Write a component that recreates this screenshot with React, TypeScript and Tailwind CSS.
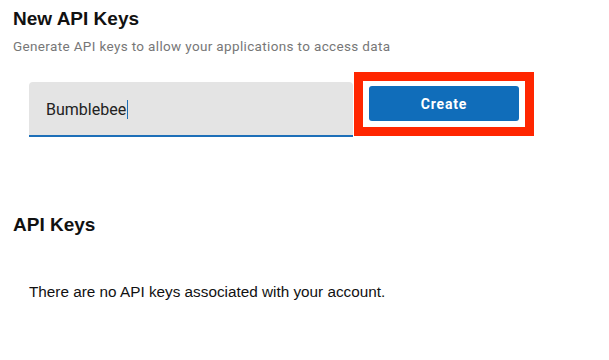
import React from "react";

export default function App() {
  return (
    <div className="min-h-[360px] w-[609px] bg-white pl-[13px] font-['Liberation_Sans',Arial,sans-serif]">
      {/* New keys */}
      <h1 className="pt-[8px] text-[19px] font-bold leading-[22px] text-[#111]">New API Keys</h1>
      <p className="mt-[8px] font-['Roboto',sans-serif] text-[13.5px] leading-[16px] tracking-[0.35px] text-[#777]">
        Generate API keys to allow your applications to access data
      </p>

      <div className="mt-[18px] flex items-start pl-[16px]">
        <div className="mt-[10px] flex h-[55px] w-[324px] items-center rounded-t-[4px] border-b-2 border-[#1d6fb8] bg-[#e4e4e4] px-[17px] pt-[2px]">
          <span className="font-['Roboto',sans-serif] text-[16px] text-[#222]">Bumblebee</span>
          <span className="ml-px h-[19px] w-px bg-[#1d6fb8]" />
        </div>
        <div className="ml-px border-[9.5px] border-[#ff2600] px-[6px] pt-[5px] pb-[6px]">
          <button className="h-[35px] w-[150px] rounded-[3px] bg-[#106dba] pt-[2px] font-['Roboto',sans-serif] text-[14px] font-bold tracking-[0.06em] text-white">
            Create
          </button>
        </div>
      </div>

      {/* Existing keys */}
      <h2 className="mt-[77px] text-[19px] font-bold leading-[22px] text-[#111]">API Keys</h2>
      <p className="mt-[47px] pl-[16px] text-[15.3px] leading-[18px] text-[#111]">
        There are no API keys associated with your account.
      </p>
    </div>
  );
}
